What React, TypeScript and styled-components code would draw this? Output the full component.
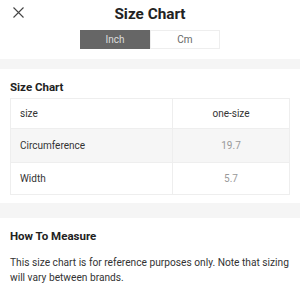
import React, { useState } from "react";
import styled, { createGlobalStyle } from "styled-components";

const GlobalStyle = createGlobalStyle`
  html, body {
    margin: 0;
    padding: 0;
    background: #fff;
    font-family: Roboto, "Liberation Sans", sans-serif;
    color: #222;
  }
`;

const Page = styled.div`
  width: 300px;
  display: flex;
  flex-direction: column;
`;

const Header = styled.div`
  position: relative;
  height: 26px;
  display: flex;
  align-items: center;
  justify-content: center;
`;

const Close = styled.button`
  position: absolute;
  left: 12px;
  top: 6px;
  width: 12px;
  height: 12px;
  padding: 0;
  border: 0;
  background: none;
  display: flex;
  align-items: center;
  justify-content: center;
`;

const Title = styled.h1`
  margin: 0;
  font-size: 15.3px;
  font-weight: 700;
  color: #222;
  line-height: 20px;
  padding-top: 1px;
`;

const Toggle = styled.div`
  display: flex;
  justify-content: center;
  margin-top: 4px;
`;

const Segment = styled.button<{ $active: boolean }>`
  width: 70px;
  height: 19px;
  padding: 0;
  font-family: inherit;
  font-size: 10px;
  border: 1px solid ${(p) => (p.$active ? "#666" : "#eee")};
  background: ${(p) => (p.$active ? "#666" : "#fff")};
  color: ${(p) => (p.$active ? "#ddd" : "#666")};
`;

const Band = styled.div<{ $h: number; $top?: number }>`
  height: ${(p) => p.$h}px;
  margin-top: ${(p) => p.$top ?? 0}px;
  background: #f5f5f5;
`;

const Section = styled.div<{ $top: number; $bottom?: number }>`
  padding: ${(p) => p.$top}px 10px ${(p) => p.$bottom ?? 0}px;
`;

const SectionTitle = styled.h2<{ $gap: number }>`
  margin: 0 0 ${(p) => p.$gap}px;
  font-size: 11.5px;
  font-weight: 700;
  color: #222;
  line-height: 14px;
`;

const Table = styled.div`
  border: 1px solid #eee;
  display: grid;
  grid-template-columns: 162px 1fr;
`;

const Cell = styled.div<{ $h: number; $value?: boolean; $shade?: boolean; $head?: boolean; $last?: boolean }>`
  height: ${(p) => p.$h}px;
  display: flex;
  align-items: center;
  justify-content: ${(p) => (p.$value ? "center" : "flex-start")};
  padding-left: ${(p) => (p.$value ? 0 : 9)}px;
  font-size: 10px;
  color: ${(p) => (p.$value && !p.$head ? "#999" : "#333")};
  background: ${(p) => (p.$shade ? "#f6f6f6" : "#fff")};
  border-right: ${(p) => (p.$value ? "none" : "1px solid #eee")};
  border-bottom: ${(p) => (p.$last ? "none" : "1px solid #eee")};
  box-sizing: border-box;
`;

const Text = styled.p`
  margin: 0;
  font-size: 10.2px;
  line-height: 15px;
  color: #333;
`;

const rows = [
  { label: "Circumference", inch: "19.7", cm: "50", h: 34 },
  { label: "Width", inch: "5.7", cm: "14.5", h: 31 },
];

export default function App() {
  const [unit, setUnit] = useState<"inch" | "cm">("inch");
  return (
    <Page>
      <GlobalStyle />
      <Header>
        <Close aria-label="close">
          <svg width="11" height="11" viewBox="0 0 11 11">
            <path d="M0.5 0.5L10.5 10.5M10.5 0.5L0.5 10.5" stroke="#444" strokeWidth="1.1" />
          </svg>
        </Close>
        <Title>Size Chart</Title>
      </Header>
      <Toggle>
        <Segment $active={unit === "inch"} onClick={() => setUnit("inch")}>Inch</Segment>
        <Segment $active={unit === "cm"} onClick={() => setUnit("cm")}>Cm</Segment>
      </Toggle>
      <Band $h={10} $top={10} />
      <Section $top={11} $bottom={8}>
        <SectionTitle $gap={4}>Size Chart</SectionTitle>
        <Table>
          <Cell $h={30} $head>size</Cell>
          <Cell $h={30} $head $value>one-size</Cell>
          {rows.map((r, i) => (
            <React.Fragment key={r.label}>
              <Cell $h={r.h} $shade={i === 0} $last={i === rows.length - 1}>{r.label}</Cell>
              <Cell $h={r.h} $value $shade={i === 0} $last={i === rows.length - 1}>
                {unit === "inch" ? r.inch : r.cm}
              </Cell>
            </React.Fragment>
          ))}
        </Table>
      </Section>
      <Band $h={15} />
      <Section $top={11}>
        <SectionTitle $gap={12}>How To Measure</SectionTitle>
        <Text>This size chart is for reference purposes only. Note that sizing will vary between brands.</Text>
      </Section>
    </Page>
  );
}
